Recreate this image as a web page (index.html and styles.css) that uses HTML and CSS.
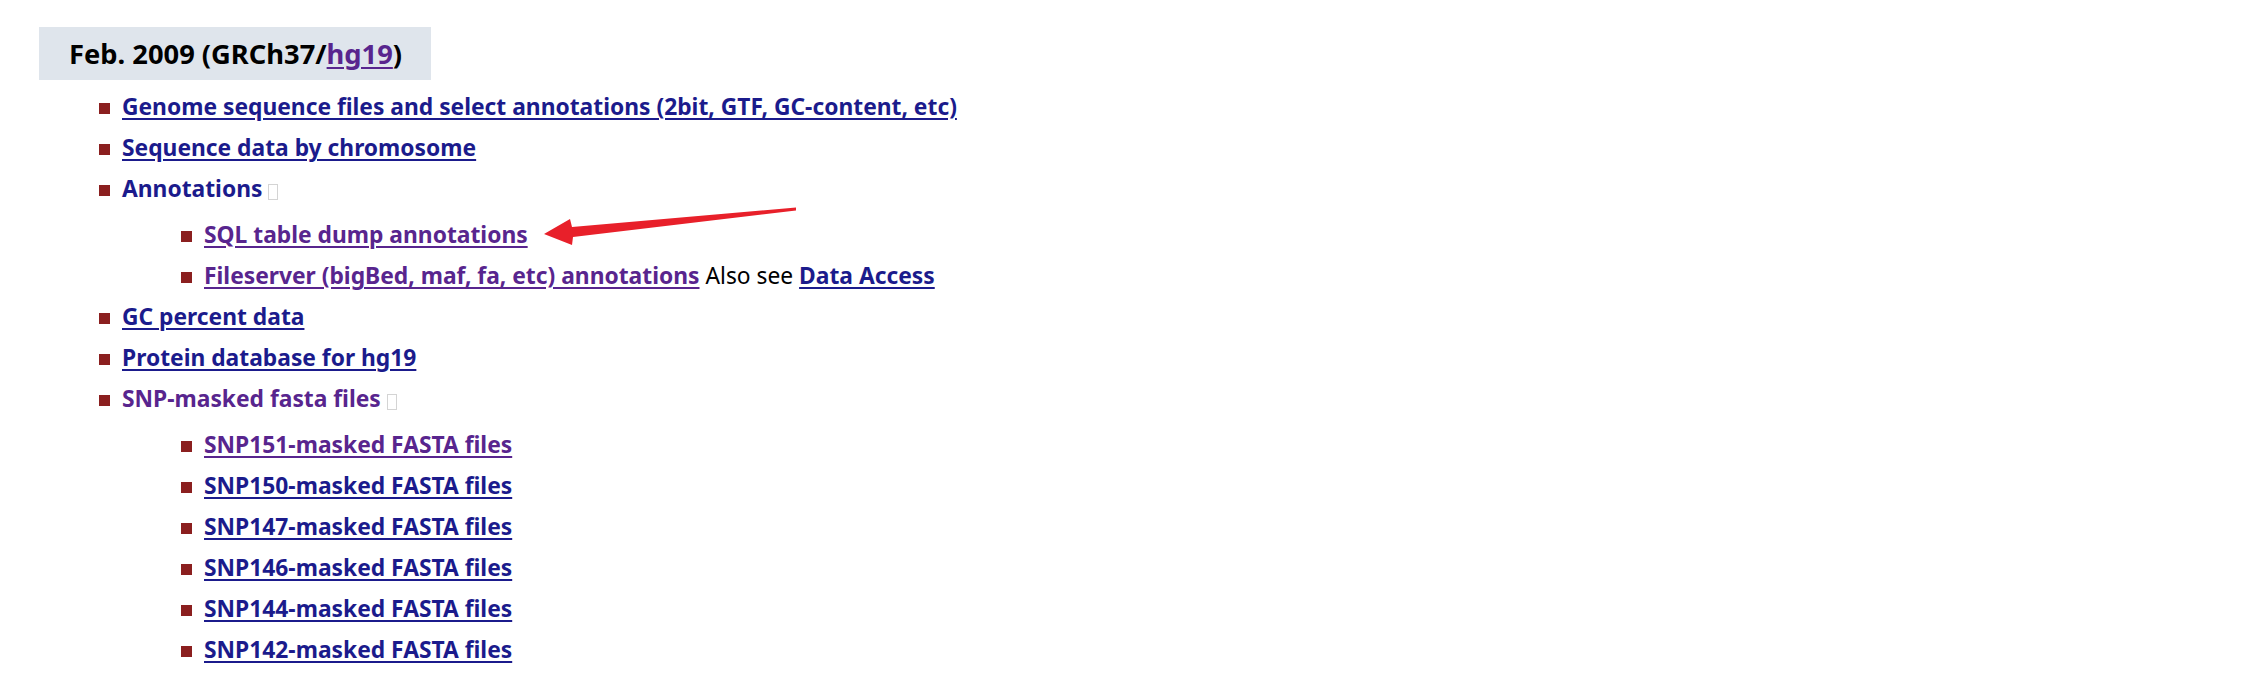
FILE: index.html
```html
<!DOCTYPE html>
<html lang="en">
<head>
<meta charset="utf-8">
<title>hg19 downloads</title>
<link rel="stylesheet" href="styles.css">
</head>
<body>
<div class="page">
  <div class="assembly">Feb. 2009 (GRCh37/<a class="visited" href="#">hg19</a>)</div>
  <ul class="downloads">
    <li><a href="#">Genome sequence files and select annotations (2bit, GTF, GC-content, etc)</a></li>
    <li><a href="#">Sequence data by chromosome</a></li>
    <li><span class="toggle">Annotations</span><span class="tofu"></span>
      <ul class="sub">
        <li><a class="visited" href="#">SQL table dump annotations</a></li>
        <li><a class="visited" href="#">Fileserver (bigBed, maf, fa, etc) annotations</a> <span class="plain">Also see</span> <a href="#">Data Access</a></li>
      </ul>
    </li>
    <li><a href="#">GC percent data</a></li>
    <li><a href="#">Protein database for hg19</a></li>
    <li><span class="toggle visited">SNP-masked fasta files</span><span class="tofu"></span>
      <ul class="sub">
        <li><a class="visited" href="#">SNP151-masked FASTA files</a></li>
        <li><a href="#">SNP150-masked FASTA files</a></li>
        <li><a href="#">SNP147-masked FASTA files</a></li>
        <li><a href="#">SNP146-masked FASTA files</a></li>
        <li><a href="#">SNP144-masked FASTA files</a></li>
        <li><a href="#">SNP142-masked FASTA files</a></li>
      </ul>
    </li>
  </ul>
  <svg class="arrow" width="262" height="50" viewBox="0 0 262 50" aria-hidden="true">
    <polygon points="4,34 30,19 32,27 256,7.5 256,10.5 33,37 32,45" fill="#e8202a"/>
  </svg>
</div>
</body>
</html>
```

FILE: styles.css
```css
html, body {
  margin: 0;
  padding: 0;
  background: #ffffff;
}

body {
  font-family: "Noto Sans", "Open Sans", sans-serif;
  font-weight: 700;
  font-size: 22.8px;
  color: #000000;
}

.page {
  position: relative;
  padding: 27px 0 0 39px;
}

.assembly {
  display: inline-block;
  height: 53px;
  line-height: 53px;
  padding: 0 29px 0 30px;
  background: #dfe5ec;
  font-size: 27.3px;
  color: #000000;
}

a {
  color: #1b1b8c;
  text-decoration: underline;
  text-decoration-thickness: 2px;
  text-underline-offset: 3px;
}

a.visited,
.visited {
  color: #58258e;
}

.downloads {
  list-style: none;
  margin: 6px 0 0 0;
  padding: 0 0 0 60px;
}

.downloads li {
  line-height: 41px;
}

.downloads li::before {
  content: "";
  display: inline-block;
  width: 11px;
  height: 11px;
  margin-right: 12px;
  background: #8b1f1f;
  vertical-align: 1px;
}

.sub {
  list-style: none;
  margin: 5px 0 0 0;
  padding: 0 0 0 82px;
}

.toggle {
  color: #1b1b8c;
}

.toggle.visited {
  color: #58258e;
}

.tofu {
  display: inline-block;
  width: 8px;
  height: 14px;
  margin-left: 6px;
  border: 1.5px solid #d4d4d4;
  vertical-align: -3px;
}

.plain {
  font-weight: 400;
  color: #000000;
}

.arrow {
  position: absolute;
  left: 540px;
  top: 200px;
}
```
